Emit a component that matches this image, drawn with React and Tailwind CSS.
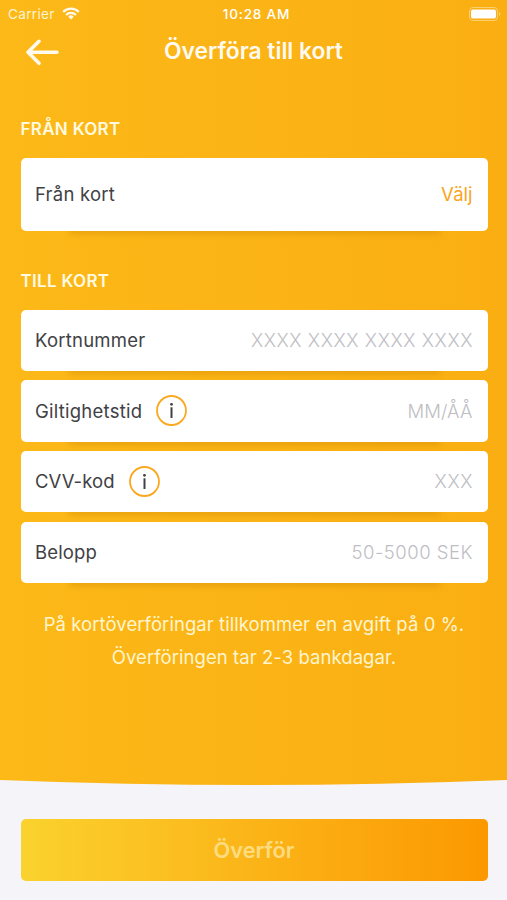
const fields = [
  { label: 'Kortnummer', placeholder: 'XXXX XXXX XXXX XXXX', labelSize: 'tracking-[0.22px]', inputSize: 'tracking-[0.56px] -mr-[0.5px]' },
  { label: 'Giltighetstid', placeholder: 'MM/ÅÅ', info: true, labelSize: 'tracking-[0.24px]', inputSize: 'tracking-[0.1px]' },
  { label: 'CVV-kod', placeholder: 'XXX', info: true, labelSize: 'tracking-[0.08px]', inputSize: 'tracking-[0.56px] -mr-[0.5px]' },
  { label: 'Belopp', placeholder: '50-5000 SEK', labelSize: 'tracking-[0.15px]', inputSize: 'tracking-[0.5px] -mr-[0.5px]' },
];

const StatusBar = () => (
  <div className="grid grid-cols-[1fr_auto_1fr] items-center h-[27px] pt-px pl-2 pr-[6px] text-[13.600px] text-white">
    <div className="flex items-center gap-[7px]">
      <span className="text-[#fff3d0] tracking-[0.3px]">Carrier</span>
      <svg className="-mt-px" width="18" height="13" viewBox="0 0 18 13" fill="none" stroke="#fffaf0" strokeWidth="2.2">
        <path d="M1.2 4.9a11 11 0 0 1 15.6 0" />
        <path d="M4.1 7.9a6.9 6.9 0 0 1 9.8 0" />
        <path d="M9 12.4l-2.7-2.7a3.8 3.8 0 0 1 5.4 0z" fill="#fffaf0" stroke="none" />
      </svg>
    </div>
    <span className="pl-[4px] font-medium tracking-[0.800px] whitespace-nowrap">10:28 AM</span>
    <svg className="justify-self-end -mt-px" width="32" height="14" viewBox="0 0 32 14">
      <rect x="0.5" y="0.5" width="28" height="13" rx="3.5" fill="none" stroke="#fff" strokeOpacity="0.4" />
      <rect x="2" y="2.500" width="25" height="9" rx="2" fill="#fff" />
      <path d="M30 5v4c1-.4 1.4-1.100 1.400-2s-.4-1.600-1.400-2z" fill="#fff" fillOpacity="0.4" />
    </svg>
  </div>
);

const Card = ({ className, children }) => (
  <div className="relative">
    <div className="absolute inset-x-12 -bottom-[3px] h-2 bg-[#c88400]/40 blur-[3px]" />
    <div className={`relative flex items-center justify-between pl-[14.500px] pr-[15px] pt-px bg-white rounded-[5px] text-[18.5px] text-[#414145] ${className}`}>
      {children}
    </div>
  </div>
);

const InfoButton = () => (
  <button type="button" aria-label="Info" className="ml-[14px] -mt-[2px] flex">
    <svg width="31" height="31" viewBox="0 0 31 31">
      <circle cx="15.500" cy="15.500" r="14.500" fill="none" stroke="#fba820" strokeWidth="1.800" />
      <circle cx="15.500" cy="9.300" r="1.400" fill="#414145" />
      <path d="M15.500 12.300v10.700" stroke="#414145" strokeWidth="2" />
    </svg>
  </button>
);

const App = () => {
  return (
    <div className="w-[507px] h-[900px] overflow-hidden flex flex-col bg-[#f4f4f9] font-['Inter','Liberation_Sans',sans-serif]">
      <div className="h-[780px] shrink-0 flex flex-col bg-linear-to-r from-[#fcb918] to-[#faae12]">
        <StatusBar />

        <header className="grid grid-cols-[60px_1fr_60px] items-center h-[49px]">
          <button type="button" aria-label="Tillbaka" className="pl-[25px]">
            <svg width="35" height="28" viewBox="0 0 35 28" fill="none" stroke="#fffaf0" strokeWidth="3.600" strokeLinecap="round" strokeLinejoin="round">
              <path d="M32 14.300H3M14 3.300L3 14.300l11 11" />
            </svg>
          </button>
          <h1 className="text-center text-[22.800px] font-semibold text-[#fffaf0] whitespace-nowrap">Överföra till kort</h1>
        </header>

        <main className="pl-[20.500px] pr-[19.500px]">
          <h2 className="mt-[43px] h-5 leading-5 text-[17px] font-semibold tracking-[0.3px] text-[#fffae0]">FRÅN KORT</h2>
          <div className="mt-[18.500px]">
            <Card className="h-[73.500px]">
              <span className="tracking-[0.22px]">Från kort</span>
              <button type="button" className="text-[#f9a51c]">Välj</button>
            </Card>
          </div>

          <h2 className="mt-[40px] h-5 leading-5 text-[17px] font-semibold tracking-[0.3px] text-[#fffae0]">TILL KORT</h2>
          <div className="mt-[18.500px] flex flex-col gap-[9.400px]">
            {fields.map(f => (
              <Card key={f.label} className="h-[61.400px]">
                <div className="flex items-center">
                  <span className={f.labelSize}>{f.label}</span>
                  {f.info && <InfoButton />}
                </div>
                <span className={`font-light text-[#bebec3] ${f.inputSize}`}>{f.placeholder}</span>
              </Card>
            ))}
          </div>

          <div className="mt-[25px] text-center text-[18.500px] leading-[33px] tracking-[0.06px] text-[#fff5cf] whitespace-nowrap">
            <p>På kortöverföringar tillkommer en avgift på 0 %.</p>
            <p>Överföringen tar 2-3 bankdagar.</p>
          </div>
        </main>
      </div>

      <svg className="block shrink-0" width="507" height="5" viewBox="0 0 507 5">
        <defs>
          <linearGradient id="curve" gradientUnits="userSpaceOnUse" x1="0" y1="0" x2="507" y2="0">
            <stop offset="0" stopColor="#fcb918" />
            <stop offset="1" stopColor="#faae12" />
          </linearGradient>
        </defs>
        <path d="M0 0Q253.500 10 507 0z" fill="url(#curve)" />
      </svg>

      <footer className="pt-[34px] pl-[20.500px] pr-[19.500px]">
        <button type="button" className="w-full h-[62px] pt-px rounded-[5px] bg-linear-to-r from-[#fad22e] via-[#fbb417] to-[#fc9800] text-[21.800px] font-semibold text-[#fddc80]">
          Överför
        </button>
      </footer>
    </div>
  );
};

export default App;
